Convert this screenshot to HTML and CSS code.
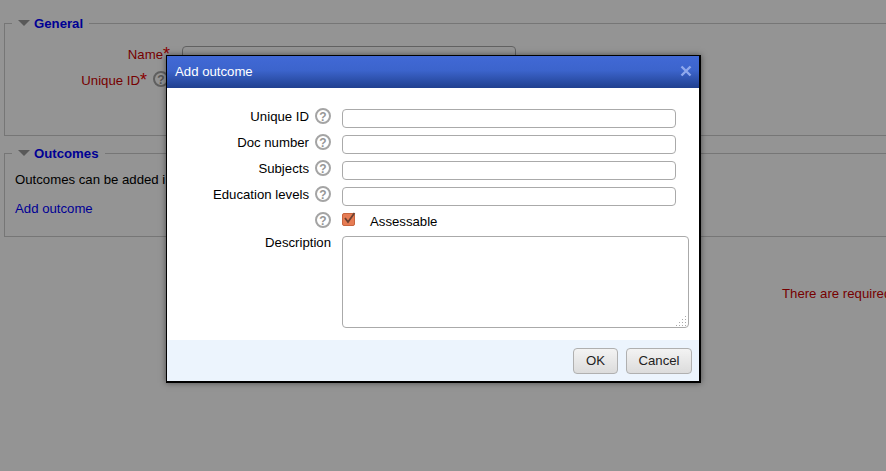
FILE: index.html
```html
<!DOCTYPE html>
<html lang="en">
<head>
<meta charset="utf-8">
<title>Add outcome</title>
<link rel="stylesheet" href="styles.css">
</head>
<body>
<main class="page">
  <fieldset class="group group-general">
    <legend class="group-title"><span class="caret"></span>General</legend>
    <div class="bg-row bg-row-name">
      <span class="bg-label">Name<span class="req">*</span></span>
      <span class="bg-input"></span>
    </div>
    <div class="bg-row bg-row-id">
      <span class="bg-label bg-label-id">Unique ID<span class="req">*</span></span>
      <svg class="help bg-help" viewBox="0 0 16 16"><circle cx="8" cy="8" r="7"/><text x="8" y="12.5">?</text></svg>
    </div>
  </fieldset>
  <fieldset class="group group-outcomes">
    <legend class="group-title"><span class="caret"></span>Outcomes</legend>
    <p class="note">Outcomes can be added i</p>
    <a class="link" href="#">Add outcome</a>
  </fieldset>
  <p class="required-note">There are required</p>
</main>
<div class="backdrop"></div>
<section class="dialog">
  <header class="dialog-head">
    <h1 class="dialog-title">Add outcome</h1>
    <svg class="close" viewBox="0 0 12 12"><path d="M1.5 1.5 10.5 10.5M10.5 1.5 1.5 10.5"/></svg>
  </header>
  <form class="dialog-body">
    <div class="row">
      <label class="label">Unique ID</label>
      <svg class="help" viewBox="0 0 16 16"><circle cx="8" cy="8" r="7"/><text x="8" y="12.5">?</text></svg>
      <input class="field" type="text">
    </div>
    <div class="row">
      <label class="label">Doc number</label>
      <svg class="help" viewBox="0 0 16 16"><circle cx="8" cy="8" r="7"/><text x="8" y="12.5">?</text></svg>
      <input class="field" type="text">
    </div>
    <div class="row">
      <label class="label">Subjects</label>
      <svg class="help" viewBox="0 0 16 16"><circle cx="8" cy="8" r="7"/><text x="8" y="12.5">?</text></svg>
      <input class="field" type="text">
    </div>
    <div class="row">
      <label class="label">Education levels</label>
      <svg class="help" viewBox="0 0 16 16"><circle cx="8" cy="8" r="7"/><text x="8" y="12.5">?</text></svg>
      <input class="field" type="text">
    </div>
    <div class="row row-check">
      <span class="label"></span>
      <svg class="help" viewBox="0 0 16 16"><circle cx="8" cy="8" r="7"/><text x="8" y="12.5">?</text></svg>
      <svg class="check" viewBox="0 0 14 14"><rect x="0.5" y="0.5" width="12" height="12" rx="1.5"/><path d="M3 5 6 9 12.5 0"/></svg>
      <span class="check-text">Assessable</span>
    </div>
    <div class="row-desc">
      <label class="desc-label">Description</label>
      <div class="area-wrap">
        <textarea class="area"></textarea>
        <svg class="grip" viewBox="0 0 11 11"><path d="M9 1h1v1H9zM6 4h1v1H6zM9 4h1v1H9zM3 7h1v1H3zM6 7h1v1H6zM9 7h1v1H9zM0 10h1v1H0zM3 10h1v1H3zM6 10h1v1H6zM9 10h1v1H9z"/></svg>
      </div>
    </div>
  </form>
  <footer class="dialog-foot">
    <button class="btn btn-ok" type="button">OK</button>
    <button class="btn btn-cancel" type="button">Cancel</button>
  </footer>
</section>
</body>
</html>
```

FILE: styles.css
```css
html, body {
  margin: 0;
  height: 100%;
  overflow: hidden;
}
body {
  position: relative;
  background: #fff;
  color: #000;
  font: 13.2px/1.2 "Liberation Sans", Arial, sans-serif;
}
.page {
  width: 1100px;
  padding: 16px 0 0 4px;
  box-sizing: border-box;
}
.group {
  margin: 0 0 10px;
  padding: 0 10px;
  border: 1px solid #ccc;
  width: 1000px;
  min-width: 0;
  box-sizing: border-box;
}
.group-general { height: 120px; }
.group-outcomes { height: 91px; }
.group-title {
  margin-left: -3px;
  padding: 0 6px;
  font-weight: bold;
  color: #00f;
  line-height: 15px;
  display: flex;
  align-items: center;
}
.caret {
  width: 0;
  height: 0;
  margin: -2px 4px 0 0;
  border-style: solid;
  border-width: 6px 6px 0;
  border-color: #999 transparent transparent;
}
.bg-row {
  display: flex;
  align-items: center;
  height: 26px;
}
.bg-row-name { margin-top: 11px; }
.bg-label {
  width: 165px;
  margin-left: -10px;
  text-align: right;
  color: #c00;
}
.bg-label-id { width: 142px; }
.req { color: #e00; font-size: 18px; line-height: 10px; vertical-align: -1px; }
.bg-input {
  width: 332px;
  height: 19px;
  margin-left: 12px;
  border: 1px solid #aaa;
  border-radius: 4px;
  background: #fff;
  position: relative;
  top: 1px;
}
.bg-help { margin-left: 13px; top: 0; }
.note { margin: 11px 0 0; line-height: 16px; white-space: nowrap; }
.link {
  display: block;
  margin-top: 13px;
  color: #00f;
  text-decoration: none;
  line-height: 16px;
}
.required-note {
  margin: 49px 0 0 778px;
  color: #c00;
  white-space: nowrap;
}
.backdrop {
  position: absolute;
  inset: 0;
  background: rgba(0, 0, 0, .42);
}
.dialog {
  position: absolute;
  left: 166px;
  top: 55px;
  width: 535px;
  height: 328px;
  box-sizing: border-box;
  border: 1px solid #000;
  border-width: 1px 2px 2px 1px;
  background: #fff;
  box-shadow: 0 0 6px rgba(0, 0, 0, .5);
  display: flex;
  flex-direction: column;
}
.dialog-head {
  height: 32px;
  flex: none;
  display: flex;
  align-items: center;
  justify-content: space-between;
  padding: 0 7px 0 8px;
  background: linear-gradient(#4169d6 0%, #3c64cc 45%, #20408f 100%);
}
.dialog-title {
  margin: 0;
  font-size: 13.2px;
  font-weight: normal;
  color: #fff;
}
.close { width: 12px; height: 12px; margin-bottom: 3px; }
.close path { fill: none; stroke: #8fa8ec; stroke-width: 2.4; }
.dialog-body {
  flex: 1;
  padding-top: 17px;
}
.row {
  display: flex;
  align-items: center;
  height: 26px;
}
.label {
  width: 142px;
  text-align: right;
  flex: none;
  position: relative;
  top: -1px;
}
.help {
  width: 16px;
  height: 16px;
  flex: none;
  margin-left: 6px;
  position: relative;
  top: -2px;
}
.help circle { fill: none; stroke: #a4a4a4; stroke-width: 2; }
.help text {
  fill: #969696;
  font: bold 12px "Liberation Sans", Arial, sans-serif;
  text-anchor: middle;
}
.field {
  width: 334px;
  height: 19px;
  box-sizing: border-box;
  margin: 0 0 0 11px;
  padding: 0 3px;
  border: 1px solid #aaa;
  border-radius: 4px;
  background: #fff;
}
.check {
  width: 14px;
  height: 14px;
  margin-left: 11px;
  flex: none;
  position: relative;
  top: -2px;
  overflow: visible;
}
.check rect { fill: #e67c54; stroke: #c8653f; }
.check path { fill: none; stroke: #6b4030; stroke-width: 1.8; }
.check-text { margin-left: 14px; }
.row-desc {
  display: flex;
  margin-top: 1px;
}
.desc-label {
  width: 164px;
  text-align: right;
  flex: none;
  position: relative;
  top: -1px;
}
.area-wrap {
  position: relative;
  margin-left: 11px;
  width: 347px;
  height: 92px;
}
.area {
  display: block;
  width: 100%;
  height: 100%;
  box-sizing: border-box;
  margin: 0;
  border: 1px solid #aaa;
  border-radius: 4px;
  background: #fff;
  resize: none;
}
.grip {
  position: absolute;
  right: 2px;
  bottom: 2px;
  width: 11px;
  height: 11px;
  fill: #aaa;
}
.dialog-foot {
  height: 41px;
  flex: none;
  display: flex;
  align-items: center;
  justify-content: flex-end;
  gap: 8px;
  padding: 0 7px 0 0;
  background: #ecf4fd;
}
.btn {
  height: 26px;
  box-sizing: border-box;
  padding: 0;
  border: 1px solid #b0b0b0;
  border-radius: 4px;
  background: linear-gradient(#f3f3f3, #dcdcdc);
  color: #222;
  font: 13.2px "Liberation Sans", Arial, sans-serif;
}
.btn-ok { width: 45px; }
.btn-cancel { width: 66px; }
```
